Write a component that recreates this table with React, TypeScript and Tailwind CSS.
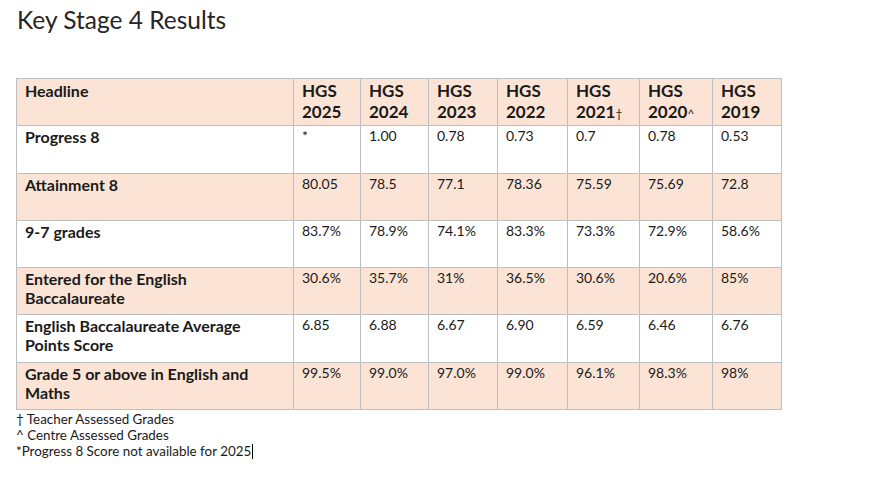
const years = [
  { label: 'HGS', year: '2025' },
  { label: 'HGS', year: '2024' },
  { label: 'HGS', year: '2023' },
  { label: 'HGS', year: '2022' },
  { label: 'HGS', year: '2021†' },
  { label: 'HGS', year: '2020^' },
  { label: 'HGS', year: '2019' },
];

const colWidths = [67, 68, 69, 70, 72, 73, 69];

const rows: { title: string; values: string[]; shaded: boolean; tall?: boolean }[] = [
  { title: 'Progress 8', values: ['*', '1.00', '0.78', '0.73', '0.7', '0.78', '0.53'], shaded: false, tall: true },
  { title: 'Attainment 8', values: ['80.05', '78.5', '77.1', '78.36', '75.59', '75.69', '72.8'], shaded: true },
  { title: '9-7 grades', values: ['83.7%', '78.9%', '74.1%', '83.3%', '73.3%', '72.9%', '58.6%'], shaded: false },
  {
    title: 'Entered for the English Baccalaureate',
    values: ['30.6%', '35.7%', '31%', '36.5%', '30.6%', '20.6%', '85%'],
    shaded: true,
  },
  {
    title: 'English Baccalaureate Average Points Score',
    values: ['6.85', '6.88', '6.67', '6.90', '6.59', '6.46', '6.76'],
    shaded: false,
    tall: true,
  },
  {
    title: 'Grade 5 or above in English and Maths',
    values: ['99.5%', '99.0%', '97.0%', '99.0%', '96.1%', '98.3%', '98%'],
    shaded: true,
  },
];

function YearHead({ label, year }: { label: string; year: string }) {
  const mark = year.slice(4);
  return (
    <th className="border border-[#bfbfbf] px-2 pt-[1px] align-top text-left text-[17px] leading-[21px] font-bold">
      {label}
      <br />
      {year.slice(0, 4)}
      {mark && <span className="text-[12px] font-normal">{mark}</span>}
    </th>
  );
}

export default function App() {
  return (
    <div className="min-h-screen bg-white text-[#1a1a1a] font-['Lato','Liberation_Sans',sans-serif]">
      <div className="pl-[17px] pt-[5px]">
        <h1 className="text-[24.5px] leading-[30px] font-normal text-[#262626]">Key Stage 4 Results</h1>
      </div>

      <div className="pl-4 pt-[43px]">
        <table className="table-fixed border-collapse w-[765px]">
          <colgroup>
            <col className="w-[277px]" />
            {colWidths.map((w, i) => (
              <col key={i} style={{ width: w }} />
            ))}
          </colgroup>
          <thead>
            <tr className="h-[47px] bg-[#fbe4d5]">
              <th className="border border-[#bfbfbf] px-2 pt-[1px] align-top text-left text-[16px] leading-[22px] font-bold">
                Headline
              </th>
              {years.map((y, i) => (
                <YearHead key={i} label={y.label} year={y.year} />
              ))}
            </tr>
          </thead>
          <tbody>
            {rows.map((r, i) => (
              <tr
                key={i}
                className={`${r.tall ? 'h-[48px]' : 'h-[47px]'} ${r.shaded ? 'bg-[#fbe4d5]' : 'bg-white'}`}
              >
                <td className="border border-[#bfbfbf] px-2 pt-[1px] pr-10 align-top text-[16px] leading-[19px] font-bold">
                  {r.title}
                </td>
                {r.values.map((v, j) => (
                  <td key={j} className="border border-[#bfbfbf] px-2 pt-0 align-top text-[14px] leading-[19px]">
                    {v}
                  </td>
                ))}
              </tr>
            ))}
          </tbody>
        </table>

        <div className="mt-[1px] text-[13.4px] leading-[16px] text-[#1a1a1a]">
          <p>† Teacher Assessed Grades</p>
          <p>^ Centre Assessed Grades</p>
          <p className="flex items-center">
            *Progress 8 Score not available for 2025
            <span className="inline-block w-px h-[15px] bg-black ml-[1px]" />
          </p>
        </div>
      </div>
    </div>
  );
}
